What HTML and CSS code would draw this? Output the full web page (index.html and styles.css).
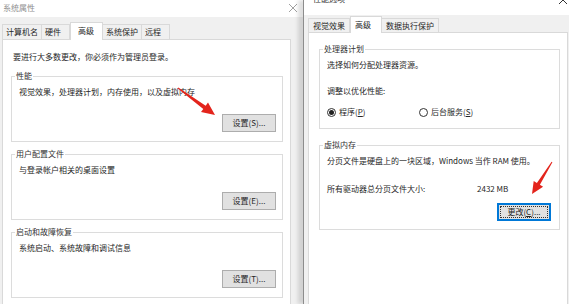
FILE: index.html
```html
<!DOCTYPE html>
<html lang="zh-CN">
<head>
<meta charset="utf-8">
<title>系统属性</title>
<link rel="stylesheet" href="styles.css">
</head>
<body>
<div class="screen">
  <section class="dlg dlg-sys">
    <header class="titlebar">
      <span class="title">系统属性</span>
      <svg class="close" width="10" height="10" viewBox="0 0 10 10"><path d="M1 1L9 9M9 1L1 9" stroke="#a0a0a0" stroke-width="1" fill="none"/></svg>
    </header>
    <div class="dlg-body">
      <nav class="tabs">
        <span class="tab">计算机名</span>
        <span class="tab">硬件</span>
        <span class="tab active">高级</span>
        <span class="tab">系统保护</span>
        <span class="tab">远程</span>
      </nav>
      <div class="panel">
        <p class="note">要进行大多数更改，你必须作为管理员登录。</p>
        <div class="group">
          <div class="legend">性能</div>
          <p class="desc">视觉效果，处理器计划，内存使用，以及虚拟内存</p>
          <div class="btn-row"><button class="btn">设置(S)...</button></div>
        </div>
        <div class="group">
          <div class="legend">用户配置文件</div>
          <p class="desc">与登录帐户相关的桌面设置</p>
          <div class="btn-row"><button class="btn">设置(E)...</button></div>
        </div>
        <div class="group">
          <div class="legend">启动和故障恢复</div>
          <p class="desc">系统启动、系统故障和调试信息</p>
          <div class="btn-row"><button class="btn">设置(T)...</button></div>
        </div>
      </div>
    </div>
  </section>

  <section class="dlg dlg-perf">
    <header class="titlebar">
      <span class="title">性能选项</span>
      <svg class="close" width="10" height="10" viewBox="0 0 10 10"><path d="M1 1L9 9M9 1L1 9" stroke="#333" stroke-width="1" fill="none"/></svg>
    </header>
    <div class="dlg-body">
      <nav class="tabs">
        <span class="tab">视觉效果</span>
        <span class="tab active">高级</span>
        <span class="tab">数据执行保护</span>
      </nav>
      <div class="panel">
        <div class="group group-cpu">
          <div class="legend">处理器计划</div>
          <p class="desc">选择如何分配处理器资源。</p>
          <p class="line adjust">调整以优化性能:</p>
          <div class="radios">
            <label class="radio"><span class="dot on"></span><span class="rtext">程序(<u>P</u>)</span></label>
            <label class="radio"><span class="dot"></span><span class="rtext">后台服务(<u>S</u>)</span></label>
          </div>
        </div>
        <div class="group group-vm">
          <div class="legend">虚拟内存</div>
          <p class="desc">分页文件是硬盘上的一块区域，Windows 当作 RAM 使用。</p>
          <div class="size-row"><span>所有驱动器总分页文件大小:</span><span>2432 MB</span></div>
          <div class="btn-row"><button class="btn focus"><span class="focus-ring">更改(<u>C</u>)...</span></button></div>
        </div>
      </div>
    </div>
  </section>

  <svg class="arrows" width="569" height="304" viewBox="0 0 569 304">
    <polygon fill="#e3241c" points="178.3,87.6 205.7,105.7 208,102.5 215,115 201,112.1 203.3,108.9 177.7,88.4"/>
    <polygon fill="#e3241c" points="552.4,162.3 539.9,184.8 543.1,186.7 532,194 533.7,180.9 536.9,182.9 551.6,161.7"/>
  </svg>
</div>
</body>
</html>
```
FILE: styles.css
```css
* { box-sizing: border-box; margin: 0; padding: 0; }
html, body { width: 569px; height: 304px; overflow: hidden; }
body {
  background: #f0f0f0;
  font-family: "Noto Sans CJK SC", "Microsoft YaHei", sans-serif;
  font-size: 8px;
  color: #262626;
}
.screen { position: relative; display: flex; height: 304px; }
.dlg { display: flex; flex-direction: column; background: #f0f0f0; height: 304px; }
.dlg-sys { width: 303px; }
.dlg-perf {
  flex: 1;
  border-left: 1px solid #8c8c8c;
  box-shadow: -5px 0 4px rgba(0, 0, 0, 0.13);
  position: relative;
}

/* title bars */
.titlebar {
  background: #fff;
  display: flex;
  justify-content: space-between;
  align-items: center;
}
.dlg-sys .titlebar { height: 17px; padding: 0 5px 2px 3px; }
.dlg-sys .title { color: #8f8f8f; line-height: 10px; }
.dlg-perf .titlebar { height: 15px; align-items: flex-start; padding: 0 1px 0 9px; overflow: hidden; }
.dlg-perf .title { color: #333; line-height: 10px; margin-top: -6px; }
.dlg-perf .close { margin-top: -5px; }

.dlg-body { flex: 1; display: flex; flex-direction: column; }
.dlg-sys .dlg-body { padding: 0 12px 0 2px; }
.dlg-perf .dlg-body { padding: 0 1px 0 4px; }

/* tabs */
.tabs { display: flex; align-items: flex-end; }
.tab {
  display: block;
  background: #f0f0f0;
  border: 1px solid #d9d9d9;
  border-bottom: none;
  line-height: 14px;
  white-space: nowrap;
}
.tab + .tab { border-left: none; }
.tab.active { background: #fff; position: relative; z-index: 1; border-left: 1px solid #d9d9d9; }
.tab.active + .tab { border-left: none; }

.dlg-sys .tabs { margin-top: 5px; height: 18px; }
.dlg-sys .tab { height: 16px; padding: 0 3px; min-width: 28px; }
.dlg-sys .tab.active { height: 18px; padding: 1px 3px 0 7px; min-width: 33px; }

.dlg-perf .tabs { margin-top: 1px; height: 17px; }
.dlg-perf .tab { height: 15px; padding: 0 4px; }
.dlg-perf .tab.active { height: 17px; padding: 1px 4px 0 4px; min-width: 32px; }

/* panel */
.panel {
  flex: 1;
  background: #fff;
  border: 1px solid #d9d9d9;
  border-bottom: none;
  margin-top: -1px;
}
.dlg-sys .panel { padding: 0 7px 0 8px; }
.dlg-perf .panel { padding: 0 7px 0 10px; }

.note { line-height: 12px; margin-top: 11px; padding-left: 2px; }

/* group boxes */
.group { border: 1px solid #dcdcdc; padding: 0 6px 0 7px; }
.dlg-sys .group { height: 66px; margin-top: 12px; }
.dlg-sys .group:first-of-type { margin-top: 13px; }
.legend {
  width: fit-content;
  margin: -6px 0 0 -4px;
  padding: 0 1px;
  background: #fff;
  line-height: 10px;
  color: #333;
}
.desc { line-height: 12px; margin-top: 5px; white-space: nowrap; }
.btn-row { display: flex; justify-content: flex-end; margin-top: 16px; }
.btn {
  width: 54px;
  height: 18px;
  font: inherit;
  color: #262626;
  background: #e1e1e1;
  border: 1px solid #adadad;
  padding: 0;
  line-height: 14px;
}

.group-cpu { height: 80px; margin-top: 16px; }
.group-vm { height: 85px; margin-top: 16px; padding-right: 8px; }
.line { line-height: 12px; }
.adjust { margin-top: 14px; }
.radios { display: flex; margin-top: 9px; line-height: 12px; }
.radio { display: flex; align-items: center; gap: 3px; }
.radio:first-child { width: 92px; }
.rtext { white-space: nowrap; }
.dot {
  width: 9px;
  height: 9px;
  border: 1px solid #333;
  border-radius: 50%;
  background: #fff;
  display: flex;
  align-items: center;
  justify-content: center;
}
.dot.on::after {
  content: "";
  width: 5px;
  height: 5px;
  border-radius: 50%;
  background: #222;
}
.size-row {
  display: grid;
  grid-template-columns: 150px auto;
  line-height: 12px;
  margin-top: 16px;
}
.group-vm .btn-row { margin-top: 8px; }
.btn.focus {
  border: 1px solid #0078d7;
  box-shadow: inset 0 0 0 1px #0078d7;
  display: flex;
  padding: 2px;
}
.focus-ring {
  flex: 1;
  outline: 1px dotted #333;
  outline-offset: -1px;
  line-height: 12px;
}

.arrows { position: absolute; left: 0; top: 0; pointer-events: none; z-index: 5; }
```
